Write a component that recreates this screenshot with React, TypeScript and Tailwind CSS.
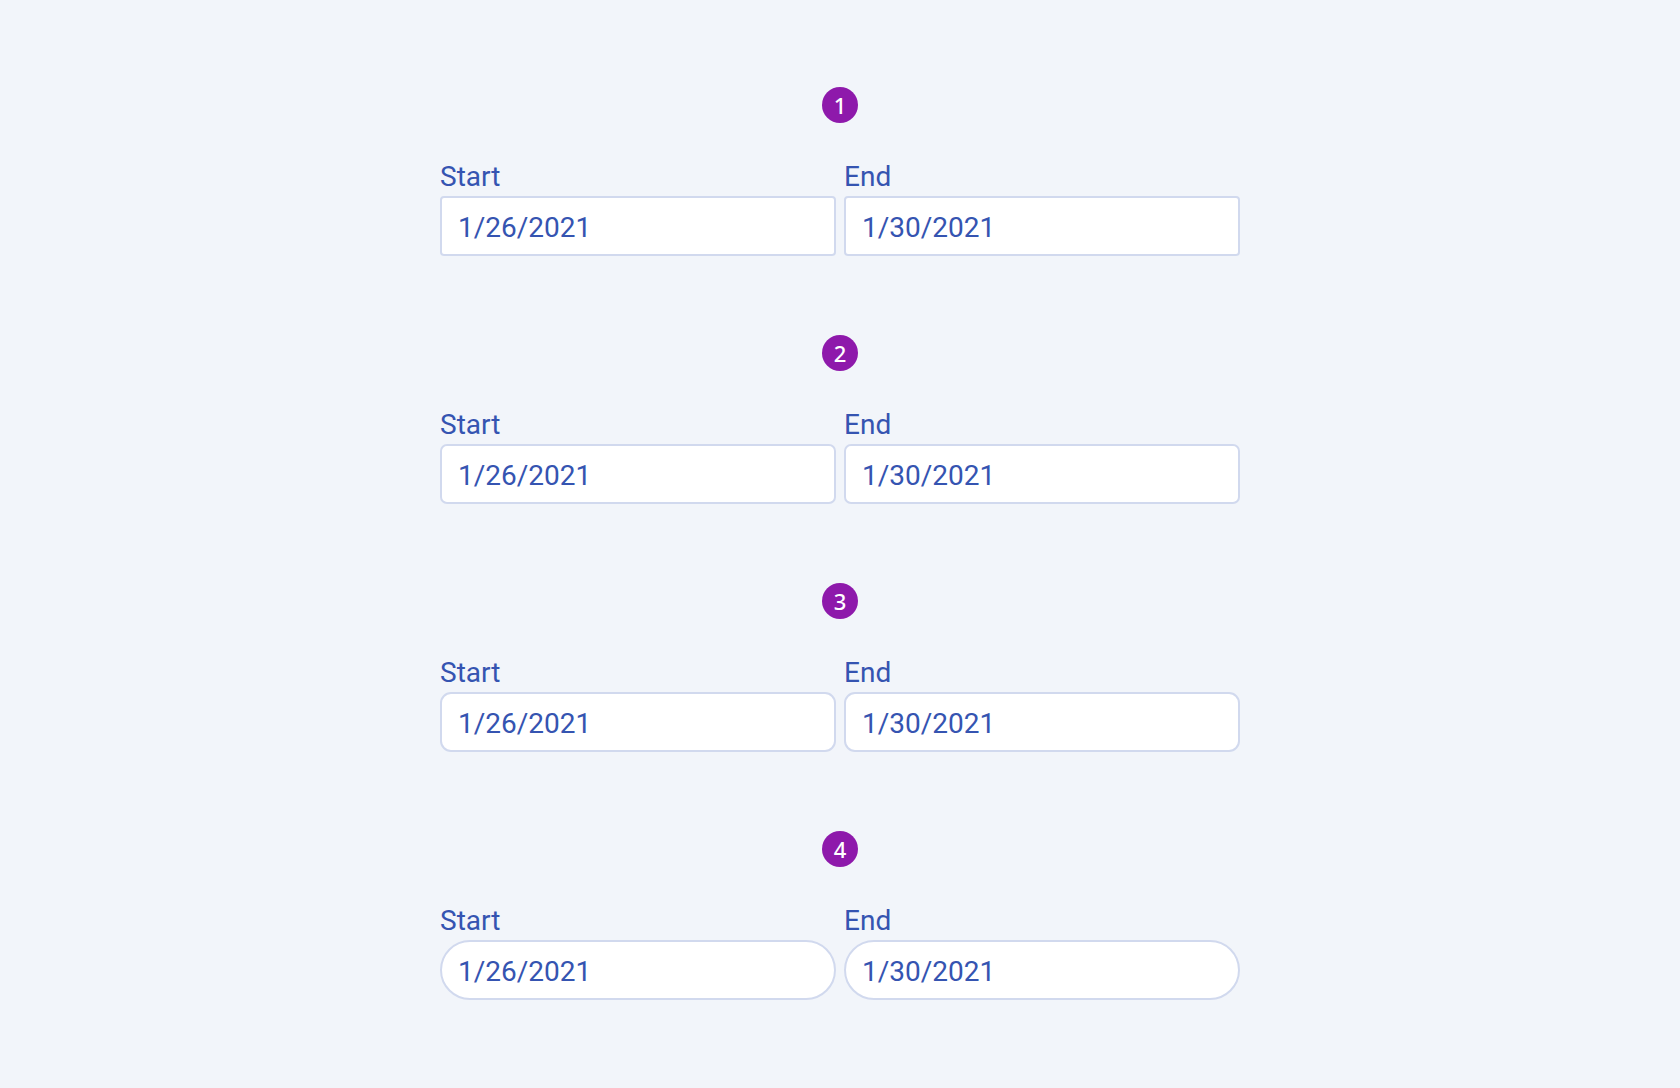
import React from "react";

const sections = [
  { n: "1", radius: "rounded-[4px]" },
  { n: "2", radius: "rounded-[7px]" },
  { n: "3", radius: "rounded-[11px]" },
  { n: "4", radius: "rounded-full" },
];

function Field({ label, value, radius }: { label: string; value: string; radius: string }) {
  return (
    <div className="flex flex-col gap-[3px] w-[396px]">
      <div className="text-[28px] leading-[32px] text-[#3554b1]">{label}</div>
      <div
        className={`h-[60px] bg-white border-2 border-[#d1d9ee] ${radius} flex items-center pl-[16px] pt-[3px] text-[28px] text-[#3554b1]`}
      >
        {value}
      </div>
    </div>
  );
}

export default function App() {
  return (
    <div
      className="min-h-screen w-full bg-[#f2f5fa] flex justify-center pt-[87px]"
      style={{ fontFamily: "Roboto, 'Liberation Sans', sans-serif" }}
    >
      <div className="w-[800px] flex flex-col gap-[79px]">
        {sections.map((s) => (
          <div key={s.n} className="flex flex-col">
            <div className="flex justify-center mb-[38px]">
              <div
                className="w-[36px] h-[36px] rounded-full bg-[#8e19ab] text-white flex items-center justify-center text-[22px] font-medium"
                style={{ fontFamily: "'Noto Sans', 'Open Sans', sans-serif" }}
              >
                {s.n}
              </div>
            </div>
            <div className="flex gap-[8px]">
              <Field label="Start" value="1/26/2021" radius={s.radius} />
              <Field label="End" value="1/30/2021" radius={s.radius} />
            </div>
          </div>
        ))}
      </div>
    </div>
  );
}
